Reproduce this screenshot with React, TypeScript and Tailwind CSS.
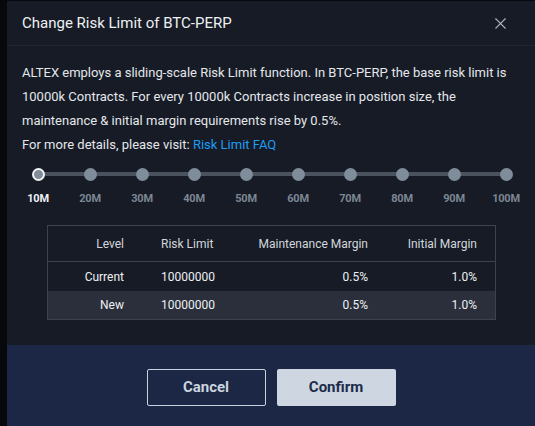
import { X } from 'lucide-react';

const levels = ['10M', '20M', '30M', '40M', '50M', '60M', '70M', '80M', '90M', '100M'];

const rows = [
  { level: 'Current', limit: '10000000', mm: '0.5%', im: '1.0%' },
  { level: 'New', limit: '10000000', mm: '0.5%', im: '1.0%' },
];

export default function App() {
  return (
    <div className="flex w-[535px] h-[426px] bg-[#07080b] overflow-hidden" style={{ fontFamily: 'Roboto, "Noto Sans", sans-serif' }}>
      <div className="w-[7px] shrink-0" />
      <div className="flex-1 flex flex-col bg-[#161b26] mt-px">
        {/* header */}
        <div className="h-[45px] flex items-center justify-between pl-[15px] pr-[25px] border-b border-[#1f2733]">
          <h2 className="text-[15px] text-[#eef0f3]">Change Risk Limit of BTC-PERP</h2>
          <X className="w-[19px] h-[19px] text-[#a9b0ba]" strokeWidth={1.4} />
        </div>

        {/* body */}
        <div className="flex-1 pt-[15px] pl-[15px] pr-[10px]">
          <p className="text-[13px] leading-[24px] text-[#e4e7eb]">
            ALTEX employs a sliding-scale Risk Limit function. In BTC-PERP, the base risk limit is 10000k Contracts. For every 10000k Contracts increase in position size, the maintenance &amp; initial margin requirements rise by 0.5%.
          </p>
          <p className="text-[13px] leading-[24px] text-[#e4e7eb]">
            For more details, please visit: <span className="text-[#1e9df2]">Risk Limit FAQ</span>
          </p>

          {/* slider */}
          <div className="relative w-[468px] ml-[16px] mt-[11px] h-[40px]">
            <div className="absolute left-0 right-0 top-[4px] h-[4px] bg-[#4a525d]" />
            <div className="relative flex justify-between">
              {levels.map((l, i) => (
                <div key={l} className="w-0 flex flex-col items-center">
                  {i === 0 ? (
                    <div className="w-[13px] h-[13px] shrink-0 rounded-full bg-[#7f8c99] border-2 border-[#f1f3f5]" />
                  ) : (
                    <div className="w-[13px] h-[13px] shrink-0 rounded-full bg-[#7f8c99]" />
                  )}
                  <span
                    className={`mt-[10px] text-[11px] font-bold tracking-[-0.2px] whitespace-nowrap ${i === 0 ? 'text-[#eef0f3]' : 'text-[#7d8793]'}`}
                  >
                    {l}
                  </span>
                </div>
              ))}
            </div>
          </div>

          {/* table */}
          <div className="ml-[25px] mt-[17px] w-[449px] border border-[#3b434f] text-[12px]">
            <div className="grid grid-cols-[76px_90px_154px_109px] h-[36px] items-center border-b border-[#3b434f] text-[#d3d7dc]">
              <span className="text-right">Level</span>
              <span className="pl-[37px]">Risk Limit</span>
              <span className="text-right">Maintenance Margin</span>
              <span className="text-right">Initial Margin</span>
            </div>
            {rows.map((r, i) => (
              <div
                key={r.level}
                className={`grid grid-cols-[76px_90px_154px_109px] items-center text-[#eef0f3] ${i === 0 ? 'h-[29px]' : 'h-[28px] bg-[#2a2f3b]'}`}
              >
                <span className="text-right">{r.level}</span>
                <span className="pl-[37px]">{r.limit}</span>
                <span className="text-right">{r.mm}</span>
                <span className="text-right">{r.im}</span>
              </div>
            ))}
          </div>
        </div>

        {/* footer */}
        <div className="h-[81px] bg-[#1b2745] flex items-center justify-center gap-[11px] pt-[4px]">
          <button className="w-[119px] h-[37px] border border-[#c9d2dd] rounded-[2px] text-[15px] font-bold text-[#cbd4df]">
            Cancel
          </button>
          <button className="w-[119px] h-[37px] bg-[#cdd6e1] rounded-[2px] text-[15px] font-bold text-[#1c2b4b]">
            Confirm
          </button>
        </div>
      </div>
    </div>
  );
}
